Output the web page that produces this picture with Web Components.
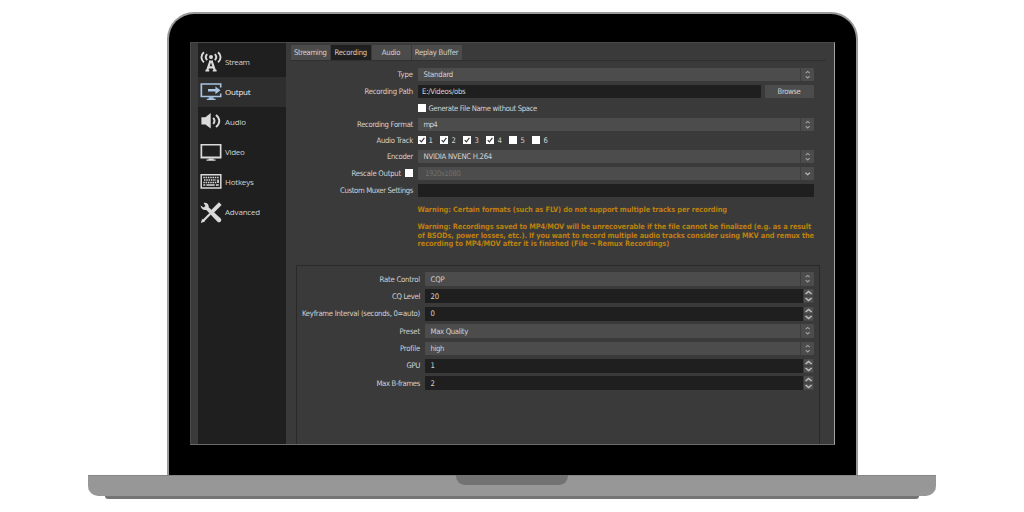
<!DOCTYPE html>
<html lang="en">
<head>
<meta charset="utf-8">
<title>Settings</title>
<style>
    body {
        margin: 0;
        width: 1024px;
        height: 512px;
        overflow: hidden;
        background: #fff;
        font-family: "DejaVu Sans Condensed", "DejaVu Sans", sans-serif;
        font-stretch: condensed;
        font-size: 7.7px;
        color: #d2d2d2;
    }
</style>
</head>
<body>
<laptop-frame>
    <settings-sidebar slot="side">
        <nav-item icon="stream" w="24.5">Stream</nav-item>
        <nav-item icon="output" w="25.5" active>Output</nav-item>
        <nav-item icon="audio" w="21">Audio</nav-item>
        <nav-item icon="video" w="19.5">Video</nav-item>
        <nav-item icon="hotkeys" w="28.5">Hotkeys</nav-item>
        <nav-item icon="advanced" w="35">Advanced</nav-item>
    </settings-sidebar>
    <output-page></output-page>
</laptop-frame>

<script>
    const ICONS = {
        stream: `
            <g fill="none" stroke="#dadada" stroke-width="1.9">
                <path d="M3.9 1.2C.6 4.2.6 8.3 3.9 11.3M18.1 1.2c3.3 3 3.3 7.1 0 10.1M7.2 3.2c-1.8 1.8-1.8 4.1 0 5.9M14.8 3.2c1.8 1.8 1.8 4.1 0 5.9"/>
                <path d="M10.2 10.5 7 19.8M11.8 10.5l3.2 9.3M8.3 16.4h5.4" stroke-width="2.2"/>
                <path d="M5.4 19.6h3.8M12.8 19.6h3.8M9 10.3h4" stroke-width="1.6"/>
            </g>
            <circle cx="11" cy="6" r="2" fill="#dadada"/>`,
        output: `
            <g fill="#a9c3e2">
                <path d="M.5 2.2h21v4.2h-1.6V3.8H2.2v10.9h17.7v-2.2h1.6v3.7H.5z"/>
                <path d="M8 8.1h7.4V5.4l5.1 3.9-5.1 3.9v-2.7H8z"/>
                <path d="M8.6 16.2h5v1.5h2v1.3H6.8v-1.3h1.8z"/>
            </g>`,
        audio: `
            <path d="M1.4 6.2h4l5.3-4.1v15.4l-5.3-4.1h-4z" fill="#dadada"/>
            <path d="M13.2 6.9q2.6 3 0 6M16 4c4.4 3.6 4.4 8.4 0 12" fill="none" stroke="#dadada" stroke-width="1.9"/>`,
        video: `
            <path d="M.5 2.9h21v14.6H.5zM2.2 4.6v10.9h17.6V4.6zM8.5 17.3h5v1.2h2v1.2h-9v-1.2h2z" fill="#dadada" fill-rule="evenodd"/>`,
        hotkeys: `
            <path d="M1.2 3.8h19.6v13.2H1.2z" fill="none" stroke="#dadada" stroke-width="1.5"/>
            <path d="M3.3 6.6h15.4M4 9h12.2M3.3 11.4h13" fill="none" stroke="#dadada" stroke-width="1.5" stroke-dasharray="1.5 .8"/>
            <path d="M17.2 8.4h1.7v3.7h-1.7zM3.3 13.2h2v1.5h-2zM6.4 13.2h8.3v1.5H6.4zM15.9 13.2h2.9v1.5h-2.9z" fill="#dadada"/>`,
        advanced: `
            <path d="M3.6.9c2.7-.8 5.5 1.2 5.1 4.3l12 11.4c1.8 1.8-1.2 5-3.2 3.2L6.3 7.9C3.4 8.6.7 6.4.6 3.5L3.5 5.6 5.5 4z" fill="#dadada"/>
            <path d="m20.3 1.6-8.5 8.5" fill="none" stroke="#dadada" stroke-width="3.8"/>
            <path d="m10.2 11.8-7.4 7.4" fill="none" stroke="#dadada" stroke-width="2.2"/>
            <path d="m.8 21 1.4-4.2 2.8 2.8z" fill="#dadada"/>`
    };

    class LaptopFrame extends HTMLElement {
        connectedCallback() {
            this.attachShadow({ mode: 'open' });
            this.shadowRoot.innerHTML = `
                <style>
                    :host {
                        display: flex;
                        flex-direction: column;
                        align-items: center;
                        padding-top: 12px;
                    }
                    .lid {
                        box-sizing: border-box;
                        width: 691px;
                        height: 463px;
                        padding: 28px 21px 0;
                        border: 2px solid #999;
                        border-bottom: 0;
                        border-radius: 27px 27px 0 0;
                        background: #000;
                    }
                    .screen {
                        box-sizing: border-box;
                        display: flex;
                        width: 645px;
                        height: 403px;
                        padding-left: 7px;
                        overflow: hidden;
                        border: 1px solid #6c6c6c;
                        border-top-color: #4a4a4a;
                        border-left-color: #4c4c4c;
                        border-right-color: #a2a2a2;
                        background: #3a3a3a;
                    }
                    .base {
                        display: flex;
                        justify-content: center;
                        width: 848px;
                        height: 21px;
                        border-radius: 0 0 10px 10px;
                        background: #979797;
                        box-shadow: inset 0 1px #858585;
                    }
                    .notch {
                        width: 112px;
                        height: 10px;
                        border-radius: 0 0 9px 9px;
                        background: #727272;
                    }
                    .foot {
                        width: 814px;
                        height: 3px;
                        border-radius: 0 0 3px 3px;
                        background: #757575;
                    }
                </style>
                <div class="lid"><div class="screen"><slot name="side"></slot><slot></slot></div></div>
                <div class="base"><div class="notch"></div></div>
                <div class="foot"></div>
            `;
        }
    }

    class SettingsSidebar extends HTMLElement {
        connectedCallback() {
            this.attachShadow({ mode: 'open' });
            this.shadowRoot.innerHTML = `
                <style>
                    :host {
                        box-sizing: border-box;
                        display: flex;
                        flex-direction: column;
                        flex: none;
                        width: 88px;
                        padding-top: 4px;
                        background: #1f1f1f;
                    }
                </style>
                <slot></slot>
            `;
        }
    }

    class NavItem extends HTMLElement {
        connectedCallback() {
            this.attachShadow({ mode: 'open' });
            this.shadowRoot.innerHTML = `
                <style>
                    :host {
                        box-sizing: border-box;
                        display: flex;
                        align-items: center;
                        gap: 3.5px;
                        height: 30.1px;
                        padding-left: 2px;
                        font-family: "Open Sans", "Noto Sans", sans-serif;
                        font-stretch: normal;
                        font-size: 8px;
                    }
                    :host([active]) {
                        background: #2e2e2e;
                        color: #eee;
                    }
                    svg {
                        display: block;
                        flex: none;
                    }
                    fit-text {
                        padding-bottom: 2px;
                    }
                </style>
                <svg width="22" height="22" viewBox="0 0 22 22">${ICONS[this.getAttribute('icon')]}</svg>
                <fit-text w="${this.getAttribute('w')}">${this.textContent}</fit-text>
            `;
        }
    }

    class OutputPage extends HTMLElement {
        connectedCallback() {
            this.attachShadow({ mode: 'open' });
            this.shadowRoot.innerHTML = `
                <style>
                    :host {
                        box-sizing: border-box;
                        display: flex;
                        flex-direction: column;
                        flex: 1;
                        min-width: 0;
                        padding: 2px 8px 0 5px;
                    }
                    .tabs {
                        display: flex;
                        gap: 1px;
                        height: 15px;
                        border-bottom: 1px solid #303030;
                    }
                    .form {
                        display: grid;
                        grid-template-rows: 17px 17px 16px 16px 16px 17px 17px 14px;
                        padding: 6.6px 12px 0 0;
                        --label: 122.5px;
                        --gap: 4.5px;
                    }
                    .tracks {
                        display: flex;
                        gap: 4.2px;
                    }
                    .tracks check-box {
                        width: 18.8px;
                    }
                    .warn {
                        display: flex;
                        flex-direction: column;
                        padding: 8.4px 0 0 127px;
                        line-height: 8.6px;
                        font-weight: bold;
                        font-size: 7.4px;
                        color: #bd800f;
                    }
                    .warn :nth-child(2) {
                        margin-top: 8.4px;
                    }
                    .group {
                        box-sizing: border-box;
                        display: grid;
                        grid-template-rows: 17px 17.5px 17.5px 17.5px 17px 17.5px 14px;
                        align-content: start;
                        flex: 1;
                        margin: 16px 6px 0 5px;
                        padding: 6.6px 5px 0 0;
                        border: 1px solid #292929;
                        border-bottom: 0;
                        --label: 123.5px;
                        --gap: 4.5px;
                    }
                </style>
                <div class="tabs">
                    <tab-item style="width:39.5px" w="32.5">Streaming</tab-item>
                    <tab-item style="width:39.5px" w="32.5" active>Recording</tab-item>
                    <tab-item style="width:39px" w="18.5">Audio</tab-item>
                    <tab-item style="width:50px" w="43.5">Replay Buffer</tab-item>
                </div>
                <div class="form">
                    <form-row label="Type" w="15.5"><combo-field w="29.5">Standard</combo-field></form-row>
                    <form-row label="Recording Path" w="48.5"><text-field w="43.5">E:/Videos/obs</text-field><push-button w="23">Browse</push-button></form-row>
                    <form-row><check-box w="108.5">Generate File Name without Space</check-box></form-row>
                    <form-row label="Recording Format" w="56"><combo-field w="13.5">mp4</combo-field></form-row>
                    <form-row label="Audio Track" w="36.5">
                        <div class="tracks">
                            <check-box w="4.5" checked>1</check-box>
                            <check-box w="4.5" checked>2</check-box>
                            <check-box w="4.5" checked>3</check-box>
                            <check-box w="4.5" checked>4</check-box>
                            <check-box w="4.5">5</check-box>
                            <check-box w="4.5">6</check-box>
                        </div>
                    </form-row>
                    <form-row label="Encoder" w="26"><combo-field w="68.5">NVIDIA NVENC H.264</combo-field></form-row>
                    <form-row label="Rescale Output" w="49.5" check><combo-field w="35.5" disabled>1920x1080</combo-field></form-row>
                    <form-row label="Custom Muxer Settings" w="73"><text-field></text-field></form-row>
                </div>
                <div class="warn">
                    <fit-text w="309.5">Warning: Certain formats (such as FLV) do not support multiple tracks per recording</fit-text>
                    <fit-text w="393">Warning: Recordings saved to MP4/MOV will be unrecoverable if the file cannot be finalized (e.g. as a result</fit-text>
                    <fit-text w="396.5">of BSODs, power losses, etc.). If you want to record multiple audio tracks consider using MKV and remux the</fit-text>
                    <fit-text w="251.5">recording to MP4/MOV after it is finished (File → Remux Recordings)</fit-text>
                </div>
                <div class="group">
                    <form-row label="Rate Control" w="40.5"><combo-field w="14">CQP</combo-field></form-row>
                    <form-row label="CQ Level" w="28"><spin-field w="8.5">20</spin-field></form-row>
                    <form-row label="Keyframe Interval (seconds, 0=auto)" w="118"><spin-field w="4.5">0</spin-field></form-row>
                    <form-row label="Preset" w="20.5"><combo-field w="37.5">Max Quality</combo-field></form-row>
                    <form-row label="Profile" w="20"><combo-field w="13.5">high</combo-field></form-row>
                    <form-row label="GPU" w="13.5"><spin-field w="4.5">1</spin-field></form-row>
                    <form-row label="Max B-frames" w="43.5"><spin-field w="4.5">2</spin-field></form-row>
                </div>
            `;
        }
    }

    class TabItem extends HTMLElement {
        connectedCallback() {
            this.attachShadow({ mode: 'open' });
            this.shadowRoot.innerHTML = `
                <style>
                    :host {
                        display: flex;
                        align-items: center;
                        justify-content: center;
                        background: #4b4b4b;
                    }
                    :host([active]) {
                        background: #1f1f1f;
                    }
                </style>
                <fit-text w="${this.getAttribute('w')}">${this.textContent}</fit-text>
            `;
        }
    }

    class FormRow extends HTMLElement {
        connectedCallback() {
            const label = this.getAttribute('label');
            this.attachShadow({ mode: 'open' });
            this.shadowRoot.innerHTML = `
                <style>
                    :host {
                        display: grid;
                        grid-template-columns: var(--label) 1fr;
                        column-gap: var(--gap);
                        height: 13.5px;
                    }
                    .label, .field {
                        display: flex;
                        align-items: center;
                        gap: 4px;
                        min-width: 0;
                    }
                    .label {
                        justify-content: flex-end;
                    }
                </style>
                <div class="label">
                    ${label ? `<fit-text w="${this.getAttribute('w')}">${label}</fit-text>` : ''}
                    ${this.hasAttribute('check') ? '<check-box></check-box>' : ''}
                </div>
                <div class="field"><slot></slot></div>
            `;
        }
    }

    class ComboField extends HTMLElement {
        connectedCallback() {
            const off = this.hasAttribute('disabled');
            const arrows = off
                ? '<path d="m4.4 5.8 2.3 2 2.3-2" stroke="#bbb" stroke-width="1.2"/>'
                : '<path d="M4.7 5.2 6.7 3.4l2 1.8M4.7 8.2l2 1.8 2-1.8" stroke="#a2a2a2" stroke-width="1.1"/>';
            this.attachShadow({ mode: 'open' });
            this.shadowRoot.innerHTML = `
                <style>
                    :host {
                        box-sizing: border-box;
                        display: flex;
                        align-items: center;
                        justify-content: space-between;
                        flex: 1;
                        height: 13.3px;
                        padding-left: 6px;
                        border-radius: 1px;
                        background: #4c4c4c;
                    }
                    :host([disabled]) {
                        padding-left: 7.5px;
                        color: #707070;
                    }
                    svg {
                        display: block;
                        border-left: 1px solid #3d3d3d;
                    }
                </style>
                <fit-text w="${this.getAttribute('w')}">${this.textContent}</fit-text>
                <svg width="13" height="13.3" viewBox="0 0 13 13.3" fill="none">${arrows}</svg>
            `;
        }
    }

    class TextField extends HTMLElement {
        connectedCallback() {
            this.attachShadow({ mode: 'open' });
            this.shadowRoot.innerHTML = `
                <style>
                    :host {
                        box-sizing: border-box;
                        display: flex;
                        align-items: center;
                        flex: 1;
                        height: 13.5px;
                        padding-left: 4.5px;
                        border-radius: 1px;
                        background: #1f1f1f;
                    }
                </style>
                ${this.textContent ? `<fit-text w="${this.getAttribute('w')}">${this.textContent}</fit-text>` : ''}
            `;
        }
    }

    class PushButton extends HTMLElement {
        connectedCallback() {
            this.attachShadow({ mode: 'open' });
            this.shadowRoot.innerHTML = `
                <style>
                    :host {
                        display: flex;
                        align-items: center;
                        justify-content: center;
                        width: 49px;
                        height: 13.5px;
                        border-radius: 1px;
                        background: #4c4c4c;
                    }
                </style>
                <fit-text w="${this.getAttribute('w')}">${this.textContent}</fit-text>
            `;
        }
    }

    class SpinField extends HTMLElement {
        connectedCallback() {
            this.attachShadow({ mode: 'open' });
            this.shadowRoot.innerHTML = `
                <style>
                    :host {
                        display: flex;
                        align-items: center;
                        flex: 1;
                        height: 13.8px;
                    }
                    .value {
                        display: flex;
                        align-items: center;
                        flex: 1;
                        height: 100%;
                        padding-left: 6px;
                        background: #1f1f1f;
                    }
                    svg {
                        display: block;
                    }
                </style>
                <div class="value"><fit-text w="${this.getAttribute('w')}">${this.textContent}</fit-text></div>
                <svg width="11" height="13.8" viewBox="0 0 11 13.8" fill="none">
                    <path d="M1 .3h9.3v6.2H1zM1 7.4h9.3v6.2H1z" fill="#505050"/>
                    <path d="m2.6 5 3-2.6 3 2.6M2.6 9l3 2.6 3-2.6" stroke="#bdbdbd" stroke-width="1.5"/>
                </svg>
            `;
        }
    }

    class CheckBox extends HTMLElement {
        connectedCallback() {
            const tick = this.hasAttribute('checked')
                ? '<path d="m1.7 4.1 1.7 1.8 3-4" fill="none" stroke="#333" stroke-width="1.1"/>' : '';
            this.attachShadow({ mode: 'open' });
            this.shadowRoot.innerHTML = `
                <style>
                    :host {
                        display: flex;
                        align-items: center;
                        gap: 3px;
                    }
                    svg {
                        display: block;
                        flex: none;
                        background: #fff;
                    }
                </style>
                <svg width="8" height="8" viewBox="0 0 8 8">${tick}</svg>
                ${this.textContent ? `<fit-text w="${this.getAttribute('w')}">${this.textContent}</fit-text>` : ''}
            `;
        }
    }

    // Tracks its letters so that the line is exactly w pixels long
    class FitText extends HTMLElement {
        connectedCallback() {
            this.attachShadow({ mode: 'open' });
            this.shadowRoot.innerHTML = `
                <style>
                    :host {
                        display: block;
                        flex: none;
                        white-space: nowrap;
                    }
                </style>
                <span><slot></slot></span>
            `;
            const span = this.shadowRoot.querySelector('span');
            const extra = this.getAttribute('w') - span.getBoundingClientRect().width;
            span.style.letterSpacing = extra / this.textContent.length + 'px';
        }
    }

    customElements.define('laptop-frame', LaptopFrame);
    customElements.define('settings-sidebar', SettingsSidebar);
    customElements.define('nav-item', NavItem);
    customElements.define('output-page', OutputPage);
    customElements.define('tab-item', TabItem);
    customElements.define('form-row', FormRow);
    customElements.define('combo-field', ComboField);
    customElements.define('text-field', TextField);
    customElements.define('push-button', PushButton);
    customElements.define('spin-field', SpinField);
    customElements.define('check-box', CheckBox);
    customElements.define('fit-text', FitText);
</script>
</body>
</html>
